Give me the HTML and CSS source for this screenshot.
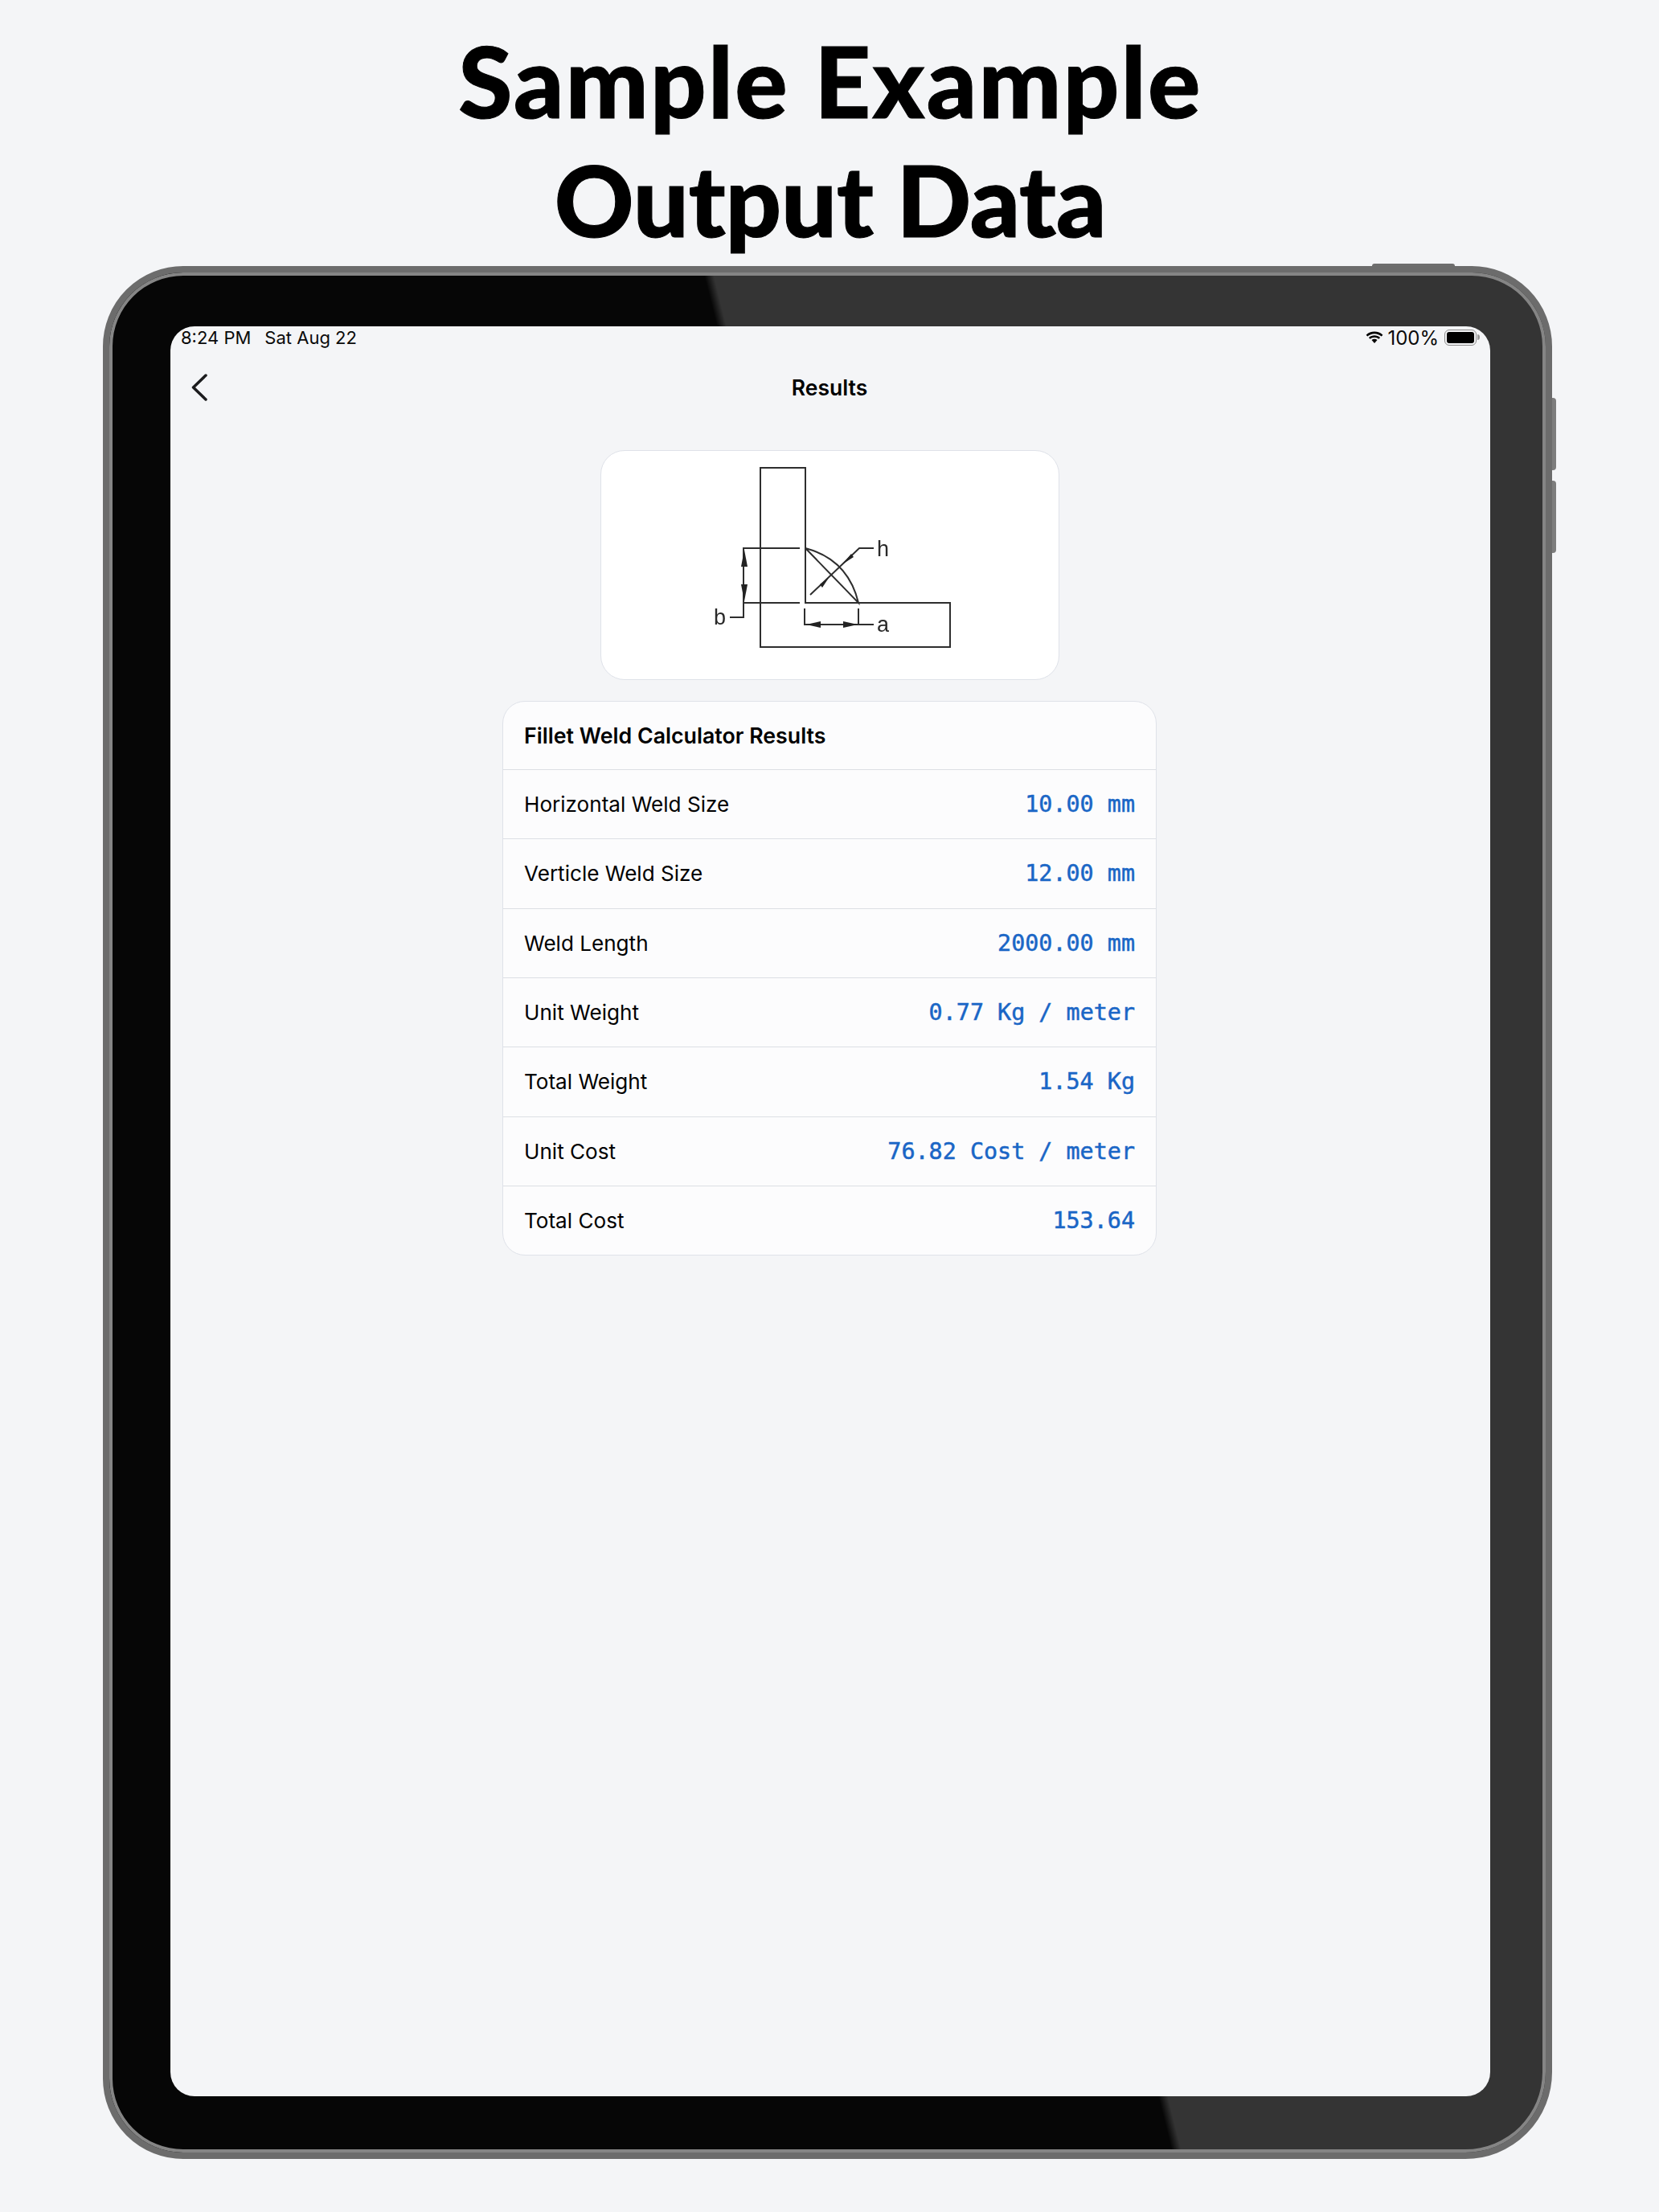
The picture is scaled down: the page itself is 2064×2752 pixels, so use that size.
FILE: index.html
```html
<!DOCTYPE html>
<html lang="en">
<head>
  <meta charset="UTF-8">
  <meta name="viewport" content="width=device-width, initial-scale=1.0">
  <title>Sample Example Output Data</title>
  <link rel="stylesheet" href="styles.css">
</head>
<body>
  <h1 class="headline"><span class="line-one">Sample Example</span><span class="line-two">Output Data</span></h1>

  <div class="tablet">
    <span class="hw-btn hw-top"></span>
    <span class="hw-btn hw-vol-up"></span>
    <span class="hw-btn hw-vol-down"></span>

    <div class="screen">
      <div class="status-bar">
        <div class="status-left">
          <span>8:24 PM</span>
          <span>Sat Aug 22</span>
        </div>
        <div class="status-right">
          <svg class="wifi" viewBox="0 0 24 16" width="24" height="16">
            <path d="M12 3.2c3.4 0 6.4 1.3 8.7 3.4l1.7-1.9C19.6 2.1 16 .6 12 .6S4.400 2.100 1.600 4.700l1.700 1.900C5.600 4.500 8.600 3.200 12 3.200z"/>
            <path d="M12 7.800c2.100 0 3.900.8 5.400 2l1.700-1.900C17.200 6.200 14.700 5.200 12 5.200s-5.200 1-7.100 2.700l1.700 1.900c1.500-1.200 3.300-2 5.400-2z"/>
            <path d="M12 9.800c-1.300 0-2.500.5-3.500 1.300l3.500 4 3.500-4c-1-.8-2.200-1.300-3.500-1.300z"/>
          </svg>
          <span>100%</span>
          <span class="battery"><span class="battery-fill"></span></span>
        </div>
      </div>

      <div class="nav-bar">
        <svg class="back" viewBox="0 0 22 34" width="22" height="34">
          <path d="M19 2 L3.500 17 L19 32"/>
        </svg>
        <span class="nav-title">Results</span>
      </div>

      <div class="content">
        <div class="diagram-card">
          <svg class="diagram" viewBox="747 560 569 285" width="569" height="285">
            <path d="M945 581H1001V749H1181V804H945Z"/>
            <path d="M994 681H924V767H907M994 749H924"/>
            <path d="M1001 681Q1054 695 1067 749L1001 681"/>
            <path d="M1007 739L1068 681H1086"/>
            <path d="M1000 756V776H1086M1067 756V776"/>
            <path class="head" d="M925 683L929 704H921Z"/>
            <path class="head" d="M925 747L929 726H921Z"/>
            <path class="head" d="M1002 776L1020 772V780Z"/>
            <path class="head" d="M1066 776L1048 772V780Z"/>
            <path class="head" d="M1030 718L1019 726L1022 730Z"/>
            <path class="head" d="M1047 701L1058 688L1061 692Z"/>
            <text x="887" y="776">b</text>
            <text x="1090" y="691">h</text>
            <text x="1090" y="785">a</text>
          </svg>
        </div>

        <div class="result-card">
          <div class="result-head">Fillet Weld Calculator Results</div>
          <div class="result-row"><span>Horizontal Weld Size</span><span class="value">10.00 mm</span></div>
          <div class="result-row"><span>Verticle Weld Size</span><span class="value">12.00 mm</span></div>
          <div class="result-row"><span>Weld Length</span><span class="value">2000.00 mm</span></div>
          <div class="result-row"><span>Unit Weight</span><span class="value">0.77 Kg / meter</span></div>
          <div class="result-row"><span>Total Weight</span><span class="value">1.54 Kg</span></div>
          <div class="result-row"><span>Unit Cost</span><span class="value">76.82 Cost / meter</span></div>
          <div class="result-row"><span>Total Cost</span><span class="value">153.64</span></div>
        </div>
      </div>
    </div>
  </div>
</body>
</html>
```

FILE: styles.css
```css
html, body {
  margin: 0;
  padding: 0;
}

body {
  width: 2064px;
  height: 2752px;
  overflow: hidden;
  background-color: #f4f5f7;
  font-family: Inter, "Liberation Sans", sans-serif;
  color: #000;
}

.headline {
  box-sizing: border-box;
  height: 331px;
  margin: 0;
  padding-top: 26px;
  padding-left: 2px;
  font-family: Lato, sans-serif;
  font-weight: 900;
  font-size: 122px;
  line-height: 148px;
  text-align: center;
  -webkit-text-stroke: 1px #000;
}

.line-one,
.line-two {
  display: block;
}

.line-one {
  letter-spacing: 2.300px;
}

.line-two {
  letter-spacing: -0.200px;
}

/* tablet body */
.tablet {
  position: relative;
  box-sizing: border-box;
  width: 1803px;
  height: 2355px;
  margin-left: 128px;
  padding: 67px 69px 70px 76px;
  border: 8px solid #6c6c6c;
  border-radius: 100px 100px 108px 100px;
  background: linear-gradient(76deg, #060606 55.8%, #343434 56.3%);
  box-shadow: inset 0 0 0 4px #858585;
}

.hw-btn {
  position: absolute;
  background-color: #6e6e6e;
}

.hw-top {
  top: -11px;
  left: 1571px;
  width: 103px;
  height: 3px;
  border-radius: 3px 3px 0 0;
}

.hw-vol-up,
.hw-vol-down {
  left: 1795px;
  width: 5px;
  border-radius: 0 4px 4px 0;
  background-color: #7d7d7d;
}

.hw-vol-up {
  top: 156px;
  height: 90px;
}

.hw-vol-down {
  top: 259px;
  height: 90px;
}

.screen {
  box-sizing: border-box;
  height: 2202px;
  border-radius: 30px;
  overflow: hidden;
  background-color: #f4f5f7;
}

/* status bar */
.status-bar {
  display: flex;
  justify-content: space-between;
  align-items: center;
  height: 28px;
  padding: 0 13px;
  font-size: 22px;
  color: #0a0a0a;
}

.status-left {
  display: flex;
  gap: 17px;
}

.status-right {
  display: flex;
  align-items: center;
  gap: 7px;
  font-size: 24px;
}

.wifi {
  margin-right: -3px;
}

.battery {
  position: relative;
  display: block;
  box-sizing: border-box;
  width: 40px;
  height: 20px;
  padding: 2px;
  border: 1.500px solid #8a8a8a;
  border-radius: 6px;
  margin-right: 4px;
}

.battery::after {
  content: "";
  position: absolute;
  top: 5px;
  right: -5px;
  width: 3px;
  height: 7px;
  border-radius: 0 3px 3px 0;
  background-color: #9a9a9a;
}

.battery-fill {
  display: block;
  height: 100%;
  border-radius: 3px;
  background-color: #000;
}

/* nav */
.nav-bar {
  position: relative;
  display: flex;
  justify-content: center;
  align-items: center;
  height: 96px;
  padding-right: 2px;
}

.back {
  position: absolute;
  left: 25px;
  top: 31px;
  fill: none;
  stroke: #1c1c1e;
  stroke-width: 3.500;
  stroke-linecap: round;
  stroke-linejoin: round;
}

.nav-title {
  font-size: 26.500px;
  font-weight: 600;
}

/* main column */
.content {
  display: flex;
  flex-direction: column;
  align-items: center;
  gap: 26px;
  padding-top: 30px;
  padding-right: 2px;
}

.diagram-card {
  box-sizing: border-box;
  width: 571px;
  height: 286px;
  border: 1.500px solid #dfe2e9;
  border-radius: 30px;
  background-color: #fff;
  display: flex;
  justify-content: center;
  align-items: center;
}

.diagram {
  filter: blur(0.4px);
}

.diagram path {
  fill: none;
  stroke: #2e2e2e;
  stroke-width: 2;
}

.diagram path.head {
  fill: #222;
  stroke: none;
}

.diagram text {
  font-family: "Liberation Sans", sans-serif;
  font-size: 27px;
  fill: #2a2a2a;
}

.result-card {
  box-sizing: border-box;
  width: 814px;
  border: 1.500px solid #dfe2e9;
  border-radius: 28px;
  background-color: #fcfcfd;
}

.result-head {
  display: flex;
  align-items: center;
  height: 84px;
  padding: 0 26px;
  font-size: 26.750px;
  font-weight: 600;
}

.result-row {
  box-sizing: border-box;
  display: flex;
  justify-content: space-between;
  align-items: center;
  height: 86.330px;
  padding: 0 26px;
  border-top: 1.500px solid #dcdfe4;
  font-size: 26.100px;
}

.value {
  font-family: "DejaVu Sans Mono", "Liberation Mono", monospace;
  font-size: 28.400px;
  color: #1a66c6;
  -webkit-text-stroke: 0.500px #1a66c6;
}
```
